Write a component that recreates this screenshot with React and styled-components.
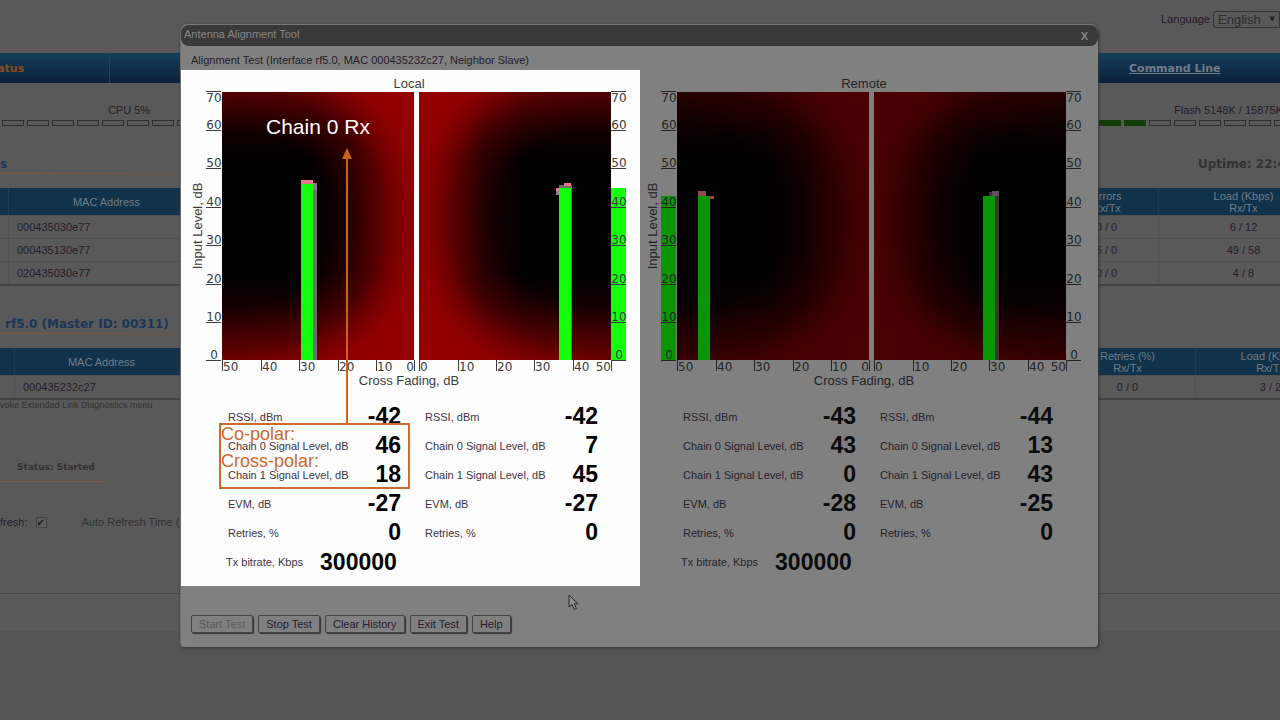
import React from "react";
import styled, {createGlobalStyle} from "styled-components";

const GlobalStyle = createGlobalStyle`
  * {
    box-sizing: border-box;
  }
  body {
    margin: 0;
    background: #545454;
    color: #261c2a;
    font-family: "Liberation Sans", Arial, sans-serif;
    font-size: 11px;
  }
  table {
    border-collapse: separate;
    border-spacing: 0;
  }
`;

const interfaces = [
  {mac: "000435030e77", errors: "0 / 0", load: "6 / 12"},
  {mac: "000435130e77", errors: "5 / 0", load: "49 / 58"},
  {mac: "020435030e77", errors: "0 / 0", load: "4 / 8"},
];

const links = [{mac: "000435232c27", retries: "0 / 0", load: "3 / 2"}];

const local = {
  title: "Local",
  side: {x: 421, y: 118},
  bars: [
    {x: 123, y: 113, w: 4, h: 177, tone: "trail"},
    {x: 123, y: 113, w: 4, h: 7, tone: "mauve"},
    {x: 111, y: 110, w: 12, h: 4, tone: "peak"},
    {x: 111, y: 114, w: 12, h: 176, tone: "signal"},
    {x: 366, y: 118, w: 4, h: 3, tone: "peak"},
    {x: 366, y: 121, w: 4, h: 4, tone: "mauve"},
    {x: 369, y: 115, w: 12, h: 3, tone: "trail"},
    {x: 374, y: 113, w: 7, h: 3, tone: "peak"},
    {x: 381, y: 115, w: 1, h: 175, tone: "trail"},
    {x: 369, y: 118, w: 12, h: 172, tone: "signal"},
  ],
  rows: [
    ["RSSI, dBm", "-42", "-42"],
    ["Chain 0 Signal Level, dB", "46", "7"],
    ["Chain 1 Signal Level, dB", "18", "45"],
    ["EVM, dB", "-27", "-27"],
    ["Retries, %", "0", "0"],
  ],
  bitrate: "300000",
};

const remote = {
  title: "Remote",
  side: {x: 16, y: 126},
  bars: [
    {x: 53, y: 121, w: 8, h: 5, tone: "peak"},
    {x: 64, y: 126, w: 5, h: 3, tone: "peak"},
    {x: 53, y: 126, w: 12, h: 164, tone: "signal"},
    {x: 350, y: 121, w: 4, h: 169, tone: "trail"},
    {x: 344, y: 122, w: 5, h: 4, tone: "trail"},
    {x: 347, y: 121, w: 7, h: 5, tone: "mauve"},
    {x: 338, y: 126, w: 12, h: 164, tone: "signal"},
  ],
  rows: [
    ["RSSI, dBm", "-43", "-44"],
    ["Chain 0 Signal Level, dB", "43", "13"],
    ["Chain 1 Signal Level, dB", "0", "43"],
    ["EVM, dB", "-28", "-25"],
    ["Retries, %", "0", "0"],
  ],
  bitrate: "300000",
};

const litTones = {
  signal: "#14ff0c",
  trail: "#716d6d",
  peak: "#ec7486",
  mauve: "#9078a0",
  red: "#980000",
  ink: "#3c3c3c",
};

const dimTones = {
  signal: "#0a9603",
  trail: "#3b3638",
  peak: "#924a52",
  mauve: "#66505e",
  red: "#4c0000",
  ink: "#252525",
};

const levels = [
  {value: 60, y: 60},
  {value: 50, y: 98},
  {value: 40, y: 137},
  {value: 30, y: 175},
  {value: 20, y: 214},
  {value: 10, y: 252},
  {value: 0, y: 290},
];

const fades = [
  {value: 50, x: 32},
  {value: 40, x: 71},
  {value: 30, x: 109},
  {value: 20, x: 148},
  {value: 10, x: 186},
  {value: 0, x: 224, before: true},
  {value: 0, x: 229},
  {value: 10, x: 268},
  {value: 20, x: 306},
  {value: 30, x: 344},
  {value: 40, x: 383},
  {value: 50, x: 421, before: true},
];

// black in the good zone, red towards zero fading and both level limits
const Zone = ({id, x, from, to, red}) => (
  <>
    <defs>
      <linearGradient
        id={`${id}-fade`}
        gradientUnits="userSpaceOnUse"
        x1={from}
        x2={to}
        y1="0"
        y2="0"
      >
        <stop offset="0.44" stopColor={red} stopOpacity="0" />
        <stop offset="0.64" stopColor={red} stopOpacity="0.15" />
        <stop offset="1" stopColor={red} stopOpacity="0.9" />
      </linearGradient>
      <linearGradient id={`${id}-level`} x1="0" x2="0" y1="0" y2="1">
        <stop offset="0" stopColor={red} stopOpacity="0.4" />
        <stop offset="0.16" stopColor={red} stopOpacity="0.1" />
        <stop offset="0.26" stopColor={red} stopOpacity="0" />
        <stop offset="0.68" stopColor={red} stopOpacity="0" />
        <stop offset="0.79" stopColor={red} stopOpacity="0.12" />
        <stop offset="1" stopColor={red} stopOpacity="0.56" />
      </linearGradient>
      <radialGradient
        id={`${id}-corner`}
        gradientUnits="userSpaceOnUse"
        cx="0"
        cy="0"
        r="1"
        gradientTransform={`translate(${from} 149) scale(208 171)`}
      >
        <stop offset="0.54" stopColor={red} stopOpacity="0" />
        <stop offset="0.78" stopColor={red} stopOpacity="0.24" />
        <stop offset="1.0" stopColor={red} stopOpacity="0.85" />
      </radialGradient>
    </defs>
    <rect x={x} y="22" width="192" height="268" fill="#000" />
    {["fade", "level", "corner"].map((layer) => (
      <rect
        key={layer}
        x={x}
        y="22"
        width="192"
        height="268"
        fill={`url(#${id}-${layer})`}
      />
    ))}
  </>
);

const LevelAxis = ({x, ink}) => (
  <g fill={ink}>
    <rect x={x} y="21" width="15" height="1" />
    <AxisText x={x + 8} y="32" textAnchor="middle">
      70
    </AxisText>
    {levels.map(({value, y}) => (
      <React.Fragment key={value}>
        <rect x={x} y={y} width="15" height="1" />
        <AxisText x={x + 8} y={y - 1} textAnchor="middle">
          {value}
        </AxisText>
      </React.Fragment>
    ))}
  </g>
);

const Chart = ({data, tones}) => {
  const {title, side, bars} = data;
  return (
    <ChartSvg width="440" height="332" viewBox="0 0 440 332">
      <ChartText x="219" y="18" textAnchor="middle" fill={tones.ink}>
        {title}
      </ChartText>
      <Zone id={`${title}-0`} x={32} from={32} to={230} red={tones.red} />
      <Zone id={`${title}-1`} x={229} from={421} to={223} red={tones.red} />
      {bars.map(({x, y, w, h, tone}, i) => (
        <rect key={i} x={x} y={y} width={w} height={h} fill={tones[tone]} />
      ))}
      <rect
        x={side.x}
        y={side.y}
        width="15"
        height={290 - side.y}
        fill={tones.signal}
      />
      <LevelAxis x={16} ink={tones.ink} />
      <LevelAxis x={421} ink={tones.ink} />
      <g fill={tones.ink}>
        {fades.map(({value, x, before}) => (
          <React.Fragment key={x}>
            <rect x={x} y="290" width="1" height="11" />
            <AxisText
              x={before ? x : x + 1}
              y="301"
              textAnchor={before ? "end" : "start"}
            >
              {value}
            </AxisText>
          </React.Fragment>
        ))}
      </g>
      <ChartText x="219" y="315" textAnchor="middle" fill={tones.ink}>
        Cross Fading, dB
      </ChartText>
      <ChartText
        transform="translate(12 156) rotate(-90)"
        textAnchor="middle"
        fill={tones.ink}
      >
        Input Level, dB
      </ChartText>
    </ChartSvg>
  );
};

const Readings = ({rows, bitrate}) => (
  <>
    <ReadingTable>
      <tbody>
        {rows.map(([label, first, second]) => (
          <tr key={label}>
            <ReadingLabel scope="row">{label}</ReadingLabel>
            <ReadingValue>{first}</ReadingValue>
            <ReadingLabel scope="row" $second>
              {label}
            </ReadingLabel>
            <ReadingValue>{second}</ReadingValue>
          </tr>
        ))}
      </tbody>
    </ReadingTable>
    <Bitrate>
      <span>Tx bitrate, Kbps</span>
      <strong>{bitrate}</strong>
    </Bitrate>
  </>
);

const Annotations = () => (
  <>
    <Callout>Chain 0 Rx</Callout>
    <Arrow width="12" height="276" viewBox="0 0 12 276">
      <path d="M6 0 L11 11 H1 Z" fill="#cc6418" />
      <rect x="5" y="10" width="2" height="266" fill="#cc6418" />
    </Arrow>
    <PolarBox>
      <span>Co-polar:</span>
      <span>Cross-polar:</span>
    </PolarBox>
  </>
);

const AlignmentDialog = () => (
  <Overlay>
    <Dialog role="dialog" aria-labelledby="dialog-title">
      <TitleBar>
        <h1 id="dialog-title">Antenna Alignment Tool</h1>
        <button type="button">X</button>
      </TitleBar>
      <Summary>
        Alignment Test (Interface rf5.0, MAC 000435232c27, Neighbor Slave)
      </Summary>
      <Panels>
        <Panel $lit>
          <Chart data={local} tones={litTones} />
          <Readings rows={local.rows} bitrate={local.bitrate} />
          <Annotations />
        </Panel>
        <Panel>
          <Chart data={remote} tones={dimTones} />
          <Readings rows={remote.rows} bitrate={remote.bitrate} />
        </Panel>
      </Panels>
      <Actions>
        <ActionButton disabled>Start Test</ActionButton>
        <ActionButton>Stop Test</ActionButton>
        <ActionButton>Clear History</ActionButton>
        <ActionButton>Exit Test</ActionButton>
        <ActionButton>Help</ActionButton>
      </Actions>
      <Pointer width="11" height="17" viewBox="0 0 11 17">
        <path
          d="M1 1 V13 L4 10.5 L6.2 15.5 L8.4 14.5 L6.3 9.8 H10 Z"
          fill="#8c8c8c"
          stroke="#2c2c2c"
        />
      </Pointer>
    </Dialog>
  </Overlay>
);

const App = () => {
  return (
    <>
      <GlobalStyle />
      <Page>
        <Header>
          <label htmlFor="language">Language</label>
          <LanguageBox>
            <select id="language" defaultValue="English">
              <option>English</option>
            </select>
            <i>▼</i>
          </LanguageBox>
        </Header>
        <Nav>
          <NavLink href="#status" $active>
            Status
          </NavLink>
          <NavLink href="#command">Command Line</NavLink>
        </Nav>
        <Meters>
          <Meter>
            <p>CPU 5%</p>
            <div>
              {Array.from({length: 10}, (_, i) => (
                <Cell key={i} />
              ))}
            </div>
          </Meter>
          <Meter $wide>
            <p>Flash 5148K / 15875K</p>
            <div>
              {Array.from({length: 8}, (_, i) => (
                <Cell key={i} $on={i < 2} />
              ))}
            </div>
          </Meter>
        </Meters>
        <SectionHead>
          <h2>s</h2>
          <Uptime>Uptime: 22:4</Uptime>
        </SectionHead>
        <StatTable>
          <colgroup>
            <col width="8" />
            <col width="196" />
            <col />
            <col width="104" />
            <col width="170" />
          </colgroup>
          <thead>
            <tr>
              <th></th>
              <th>MAC Address</th>
              <th></th>
              <th>
                Errors
                <br />
                Rx/Tx
              </th>
              <th>
                Load (Kbps)
                <br />
                Rx/Tx
              </th>
            </tr>
          </thead>
          <tbody>
            {interfaces.map(({mac, errors, load}) => (
              <tr key={mac}>
                <td></td>
                <td>{mac}</td>
                <td></td>
                <td>{errors}</td>
                <td>{load}</td>
              </tr>
            ))}
          </tbody>
        </StatTable>
        <SectionHead $gap>
          <h2>rf5.0 (Master ID: 00311)</h2>
        </SectionHead>
        <StatTable $wide>
          <colgroup>
            <col width="14" />
            <col width="174" />
            <col />
            <col width="136" />
            <col width="150" />
          </colgroup>
          <thead>
            <tr>
              <th></th>
              <th>MAC Address</th>
              <th></th>
              <th>
                Retries (%)
                <br />
                Rx/Tx
              </th>
              <th>
                Load (Kbps)
                <br />
                Rx/Tx
              </th>
            </tr>
          </thead>
          <tbody>
            {links.map(({mac, retries, load}) => (
              <tr key={mac}>
                <td></td>
                <td>{mac}</td>
                <td></td>
                <td>{retries}</td>
                <td>{load}</td>
              </tr>
            ))}
          </tbody>
        </StatTable>
        <Hint>voke Extended Link Diagnostics menu</Hint>
        <StatusLine>Status: Started</StatusLine>
        <RefreshForm>
          <label htmlFor="refresh">fresh:</label>
          <input id="refresh" type="checkbox" defaultChecked />
          <span>Auto Refresh Time (s</span>
        </RefreshForm>
      </Page>
      <AlignmentDialog />
    </>
  );
};

const Page = styled.main`
  overflow: hidden;
  padding-bottom: 37px;
  background: #595959;
`;

const Header = styled.header`
  display: flex;
  justify-content: flex-end;
  align-items: flex-start;
  height: 53px;
  padding-top: 11px;
  line-height: 17px;
  gap: 3px;
`;

const LanguageBox = styled.div`
  position: relative;
  select {
    display: block;
    appearance: none;
    width: 67px;
    height: 17px;
    padding: 0 4px;
    border: 1px solid #333;
    border-radius: 3px 0 0 3px;
    background: transparent;
    color: #2c2c2c;
    font: 13px "Liberation Sans", Arial, sans-serif;
  }
  i {
    position: absolute;
    top: 0;
    right: 5px;
    font: 7px/17px "DejaVu Sans", sans-serif;
    pointer-events: none;
  }
`;

const Nav = styled.nav`
  display: flex;
  justify-content: space-between;
  height: 30px;
  background: linear-gradient(#133e5e, #10304c 50%, #0d2038);
`;

const NavLink = styled.a`
  width: ${({$active}) => ($active ? "125px" : "151px")};
  margin-left: ${({$active}) => ($active ? "-16px" : "0")};
  border-right: ${({$active}) => ($active ? "1px solid #24445c" : "0")};
  box-sizing: content-box;
  color: ${({$active}) => ($active ? "#8a4c14" : "#707c88")};
  font: bold 11px/32px "DejaVu Sans", Verdana, sans-serif;
  text-decoration: ${({$active}) => ($active ? "none" : "underline")};
`;

const Meters = styled.section`
  display: flex;
  justify-content: space-between;
  padding: 20px 0 28px 2px;
  p {
    margin: 0 0 3px;
    line-height: 14px;
    white-space: nowrap;
  }
`;

const Meter = styled.div`
  width: ${({$wide}) => ($wide ? "181px" : "254px")};
  p {
    padding-left: ${({$wide}) => ($wide ? "75px" : "0")};
    text-align: ${({$wide}) => ($wide ? "left" : "center")};
  }
  div {
    display: flex;
    gap: 3px;
  }
`;

const Cell = styled.span`
  flex: none;
  width: 22px;
  height: 6px;
  border: 1px solid ${({$on}) => ($on ? "#123c08" : "#303030")};
  background: ${({$on}) => ($on ? "#123c08" : "transparent")};
`;

const SectionHead = styled.div`
  display: flex;
  justify-content: space-between;
  height: 20px;
  margin-top: ${({$gap}) => ($gap ? "28px" : "0")};
  margin-bottom: 14px;
  background: linear-gradient(90deg, #80563c, #6a584c 180px, #595959 240px)
    bottom / 100% 1px no-repeat;
  h2 {
    margin: 0;
    padding-left: ${({$gap}) => ($gap ? "5px" : "0")};
    color: #1b3657;
    font: bold 12px/20px "DejaVu Sans", Verdana, sans-serif;
  }
`;

const Uptime = styled.p`
  width: 82px;
  margin: 0;
  color: #333;
  font: bold 12px/20px "DejaVu Sans", Verdana, sans-serif;
  white-space: nowrap;
`;

const StatTable = styled.table`
  width: calc(100% + ${({$wide}) => ($wide ? "65px" : "48px")});
  table-layout: fixed;
  border-bottom: 2px solid #414141;
  th {
    height: 27px;
    padding: 0;
    border-left: 1px solid #1d3d55;
    background: #11324b;
    color: #707c86;
    font-weight: normal;
    line-height: 12px;
  }
  td {
    height: 23px;
    padding: 0;
    border-left: 1px solid #505050;
    border-top: 1px solid #505050;
    text-align: center;
  }
  th:first-child,
  td:first-child {
    border-left: 0;
  }
  td:nth-child(2) {
    padding-left: 8px;
    text-align: left;
  }
`;

const Hint = styled.p`
  margin: 0;
  height: 10px;
  color: #333;
  font-size: 9px;
  line-height: 10px;
`;

const StatusLine = styled.h3`
  width: 108px;
  margin: 48px 0 0;
  padding: 0 0 5px 17px;
  border-bottom: 1px solid #80563c;
  color: #333;
  font: bold 9px/18px "DejaVu Sans", Verdana, sans-serif;
  white-space: nowrap;
`;

const RefreshForm = styled.form`
  display: flex;
  align-items: center;
  height: 112px;
  padding-bottom: 31px;
  border-bottom: 1px solid #4a4a4a;
  input {
    appearance: none;
    position: relative;
    width: 11px;
    height: 11px;
    margin: 0 35px 0 8px;
    border: 1px solid #454545;
    background: #5d5d5d;
  }
  input:checked::after {
    content: "✔";
    position: absolute;
    inset: 0;
    color: #1c1c1c;
    font: 10px/9px "DejaVu Sans", sans-serif;
  }
  span {
    color: #333;
  }
`;

const Overlay = styled.div`
  position: absolute;
  inset: 0;
  display: flex;
  justify-content: center;
  align-items: flex-start;
  padding: 24px 2px 0 0;
`;

const Dialog = styled.section`
  position: relative;
  width: 918px;
  border-top: 1px solid #777;
  border-left: 1px solid #6c6c6c;
  border-radius: 8px 8px 4px 4px;
  background: #808080;
  box-shadow: 1px 1px 3px #333;
`;

const TitleBar = styled.header`
  display: flex;
  justify-content: space-between;
  height: 21px;
  padding: 0 10px 0 3px;
  border-radius: 8px;
  background: #393939;
  h1,
  button {
    margin: 0;
    padding: 0;
    border: 0;
    background: none;
    color: #858585;
    font: 11px/18px "Liberation Sans", Arial, sans-serif;
  }
  button {
    font-weight: bold;
  }
`;

const Summary = styled.p`
  margin: 0;
  padding: 4px 10px 0;
  line-height: 20px;
`;

const Panels = styled.div`
  display: grid;
  grid-template-columns: 459px 1fr;
`;

const Panel = styled.article`
  position: relative;
  padding: 0 0 9px ${({$lit}) => ($lit ? "9px" : "5px")};
  background: ${({$lit}) => ($lit ? "#fdfdfd" : "transparent")};
  color: ${({$lit}) => ($lit ? "#3e3444" : "#281f2c")};
  strong,
  td {
    color: ${({$lit}) => ($lit ? "#000" : "#0c0c0e")};
  }
`;

const ChartSvg = styled.svg`
  display: block;
`;

const ChartText = styled.text`
  font: 13px "Liberation Sans", Arial, sans-serif;
`;

const AxisText = styled.text`
  font: 12px "DejaVu Sans", Verdana, sans-serif;
`;

const ReadingTable = styled.table`
  margin-left: 38px;
`;

const ReadingLabel = styled.th`
  width: ${({$second}) => ($second ? "149px" : "125px")};
  height: 29px;
  padding: 0 0 0 ${({$second}) => ($second ? "24px" : "0")};
  font-weight: normal;
  text-align: left;
  white-space: nowrap;
`;

const ReadingValue = styled.td`
  width: 48px;
  padding: 0;
  font-size: 23px;
  font-weight: bold;
  line-height: 29px;
  text-align: right;
`;

const Bitrate = styled.p`
  display: flex;
  align-items: center;
  gap: 17px;
  margin: 0;
  padding-left: 36px;
  line-height: 30px;
  strong {
    font-size: 23px;
  }
`;

const Callout = styled.span`
  position: absolute;
  top: 45px;
  left: 85px;
  color: #fff;
  font-size: 21px;
  line-height: 24px;
`;

const Arrow = styled.svg`
  position: absolute;
  top: 78px;
  left: 160px;
`;

const PolarBox = styled.div`
  position: absolute;
  top: 353px;
  left: 38px;
  width: 191px;
  height: 66px;
  border: 2px solid #cc6a30;
  color: #cc6a30;
  font-size: 18px;
  line-height: 27px;
  span {
    display: block;
    margin-top: -4px;
  }
  span + span {
    margin-top: 0;
  }
`;

const Actions = styled.footer`
  display: flex;
  gap: 5px;
  padding: 29px 10px 14px;
`;

const ActionButton = styled.button`
  height: 18px;
  padding: 0 7px;
  border: 1px solid #444;
  border-radius: 2px;
  background: #808080;
  box-shadow: 1px 1px 1px #333;
  color: #261c2a;
  font: 11px "Liberation Sans", Arial, sans-serif;
  &:disabled {
    color: #5c5c5c;
  }
`;

const Pointer = styled.svg`
  position: absolute;
  top: 569px;
  left: 387px;
`;

export default App;
